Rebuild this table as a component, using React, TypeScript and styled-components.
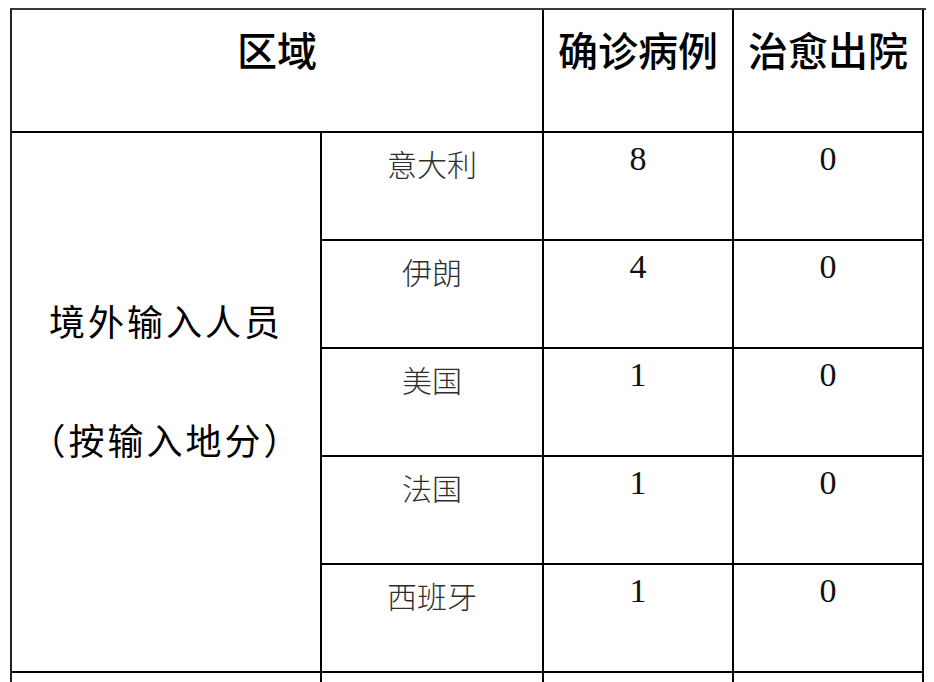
import React from "react";
import styled, { createGlobalStyle } from "styled-components";

const GlobalStyle = createGlobalStyle`
  html, body {
    margin: 0;
    padding: 0;
    background: #ffffff;
  }
  body {
    font-family: "Liberation Serif", "Noto Sans CJK SC", serif;
    color: #000;
  }
`;

const Page = styled.div`
  padding: 8px 0 0 10px;
  width: 934px;
  height: 682px;
  box-sizing: border-box;
  overflow: hidden;
`;

const Sheet = styled.div`
  display: grid;
  grid-template-columns: 310px 222px 190px 190px;
  grid-template-rows: 123px repeat(6, 108px);
  width: 914px;
  border-top: 2px solid #3a3a3a;
  border-left: 2px solid #222;
`;

const Cell = styled.div<{ $span?: number; $rows?: number }>`
  box-sizing: border-box;
  border-right: 2px solid #000;
  border-bottom: 2px solid #000;
  grid-column: span ${(p) => p.$span ?? 1};
  grid-row: span ${(p) => p.$rows ?? 1};
  display: flex;
  justify-content: center;
  align-items: flex-start;
`;

const HeadCell = styled(Cell)`
  padding-top: 15px;
  font-family: "Noto Sans CJK SC", sans-serif;
  font-size: 40px;
  font-weight: 500;
  line-height: 48px;
  color: #000;
`;

const RegionCell = styled(Cell)`
  flex-direction: column;
  align-items: center;
  justify-content: flex-start;
  gap: 71px;
  padding-top: 163px;
  font-family: "Noto Sans CJK SC", sans-serif;
  font-size: 36px;
  line-height: 48px;
  letter-spacing: 3px;
  color: #000;
`;

const NameCell = styled(Cell)`
  padding-top: 12px;
  font-family: "Noto Sans CJK SC", sans-serif;
  font-size: 30px;
  font-weight: 300;
  line-height: 36px;
  color: #2e2e2e;
`;

const NumberCell = styled(Cell)`
  padding-top: 8px;
  font-family: "Liberation Serif", serif;
  font-size: 34px;
  line-height: 36px;
  color: #111;
`;

const rows = [
  { place: "意大利", cases: 8, cured: 0 },
  { place: "伊朗", cases: 4, cured: 0 },
  { place: "美国", cases: 1, cured: 0 },
  { place: "法国", cases: 1, cured: 0 },
  { place: "西班牙", cases: 1, cured: 0 },
];

export default function App() {
  return (
    <>
      <GlobalStyle />
      <Page>
        <Sheet>
          <HeadCell $span={2}>区域</HeadCell>
          <HeadCell>确诊病例</HeadCell>
          <HeadCell>治愈出院</HeadCell>

          {/* grid auto-placement fills columns 2-4 beside the spanning region cell */}
          <RegionCell $rows={5}>
            <span>境外输入人员</span>
            <span>（按输入地分）</span>
          </RegionCell>
          {rows.map((r) => (
            <React.Fragment key={r.place}>
              <NameCell>{r.place}</NameCell>
              <NumberCell>{r.cases}</NumberCell>
              <NumberCell>{r.cured}</NumberCell>
            </React.Fragment>
          ))}

          <Cell />
          <Cell />
          <Cell />
          <Cell />
        </Sheet>
      </Page>
    </>
  );
}
